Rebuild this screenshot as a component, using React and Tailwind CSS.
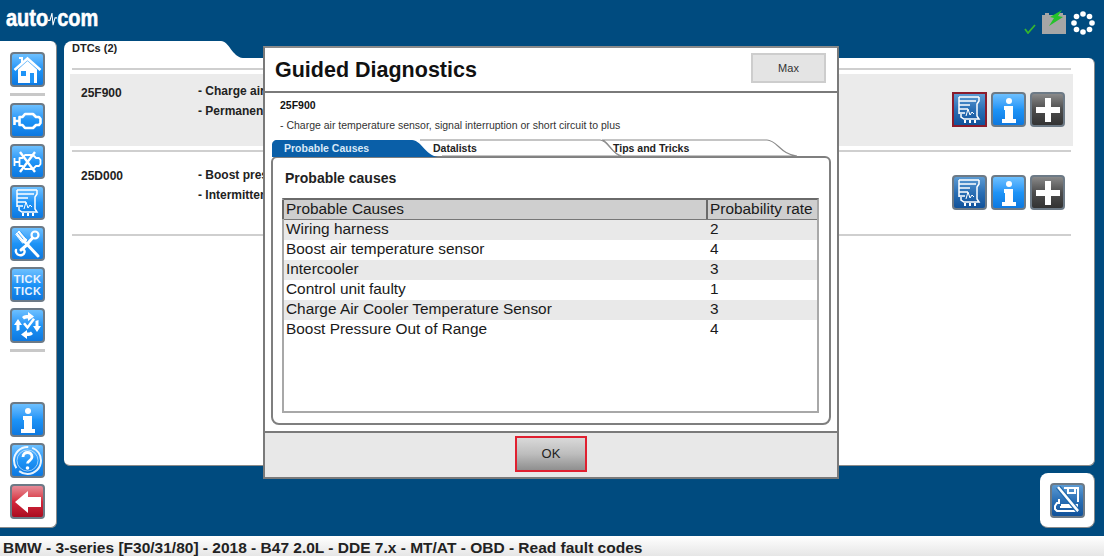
const causes = [
    ["Wiring harness", "2"],
    ["Boost air temperature sensor", "4"],
    ["Intercooler", "3"],
    ["Control unit faulty", "1"],
    ["Charge Air Cooler Temperature Sensor", "3"],
    ["Boost Pressure Out of Range", "4"],
];

const dtcs = [
    { code: "25F900", lines: ["- Charge air", "- Permanent"], active: true },
    { code: "25D000", lines: ["- Boost pres", "- Intermitten"], active: false },
];

const variants = {
    blue: "bg-gradient-to-b from-[#6cc0ff] via-[#1e94f7] to-[#0d78e0]",
    navy: "bg-gradient-to-b from-[#5c9bd3] via-[#2a6fb5] to-[#11529a]",
    red: "bg-gradient-to-b from-[#e58a98] via-[#d5263c] to-[#aa0c20]",
    dark: "bg-gradient-to-b from-[#8a8a8a] via-[#4d4d4d] to-[#333333]",
};

const IconButton = ({ variant = "blue", selected, children }) => (
    <div className={`w-[35px] h-[35px] shrink-0 rounded-[4px] flex items-center justify-center border-2 ${selected ? "border-[#8a1c2c] rounded-none" : "border-[#6d7a86]"} ${variants[variant]}`}>
        {children}
    </div>
);

const HomeIcon = () => (
    <svg width="29" height="28" viewBox="0 0 29 28" fill="none" stroke="#fff">
        <path d="M1.500 14 14.500 2.500l13 11.500" strokeWidth="2.600" />
        <path d="M6 2h3v5" strokeWidth="2" />
        <path d="M5 13.500 14.500 5l9.500 8.500V27H5z" fill="#fff" stroke="none" />
        <path d="M8 15h5v5H8zM17 17h4v10h-4z" fill="#1e94f7" stroke="none" />
    </svg>
);

const EngineIcon = ({ crossed }) => (
    <svg width="29" height="22" viewBox="0 0 29 22" fill="none" stroke="#fff" strokeWidth={crossed ? "1.800" : "2.600"} strokeLinejoin="round">
        <path d="M1.500 7v8M1.500 11h5M6.500 7h3l2.500-3h8l3 3h3l1.500 2v4l-1.500 2h-3l-3 3h-8l-2.500-3h-3z" />
        {crossed && <path d="M7 1l15 20M22 1 7 21" strokeWidth="2.400" />}
    </svg>
);

const DiagIcon = () => (
    <svg width="27" height="29" viewBox="0 0 27 29" fill="none" stroke="#fff" strokeWidth="1.500">
        <path d="M3 2h20M3 6h17M3 10h11M3 14h9M3 18h6M3 2v17" />
        <path d="M23 2v4l-2 3v12l2 3H8l-3-2v-3" />
        <path d="M10 21l2-7 2 6 2-3 2 2" strokeWidth="1" />
        <path d="M9 25v3M14 25v3M19 25v3" strokeWidth="2" />
    </svg>
);

const ToolsIcon = () => (
    <svg width="29" height="29" viewBox="0 0 29 29" fill="none" stroke="#fff" strokeLinecap="round">
        <path d="M11 12l14 15" strokeWidth="3" />
        <path d="M3 5l3-3 8 9-4 3z" fill="#fff" strokeWidth="1" />
        <path d="M5 4l5 6M8 3l5 6" stroke="#1e94f7" strokeWidth="0.800" />
        <path d="M15 15 8 21" strokeWidth="3" />
        <circle cx="22" cy="6" r="3.500" strokeWidth="2.200" />
        <path d="M19.500 9 15 14" strokeWidth="3" />
        <path d="M3 21c-1 4 3 6 6 5 3-1 3-4 2-5" strokeWidth="2.400" />
    </svg>
);

const TickIcon = () => (
    <div className="flex flex-col items-center text-[#e8f4ff] font-bold text-[11px] leading-[12px] tracking-[0.5px]">
        <span>TICK</span>
        <span>TICK</span>
    </div>
);

const CycleIcon = () => (
    <svg width="29" height="29" viewBox="0 0 29 29" fill="#fff">
        <path d="M9 6c2-2 4-2 6-2V1l6 4.500-6 4.500V7.500c-2 0-3 0-4 1zM20 23c-2 2-4 2-6 2v3l-6-4.500 6-4.500v2.500c2 0 3 0 4-1z" />
        <path d="M5 8l4 6H6.500v5l-3 1v-6H1zM24 21l-4-6h2.500v-5l3-1v6H28z" />
        <path d="M10 13l2-1.500 2.500 3L20 7l2 1.500-7.500 10z" />
    </svg>
);

const InfoIcon = () => (
    <svg width="16" height="28" viewBox="0 0 16 28" fill="#fff">
        <circle cx="8" cy="5" r="3" />
        <path d="M3 10h9v13h3v4H1v-4h3v-9H3z" />
    </svg>
);

const HelpIcon = () => (
    <svg width="31" height="31" viewBox="0 0 31 31" fill="none" stroke="#fff">
        <circle cx="15.500" cy="15.500" r="13.500" strokeWidth="2" strokeDasharray="30 4" opacity="0.900" />
        <circle cx="15.500" cy="15.500" r="10.500" strokeWidth="0.800" opacity="0.700" />
        <path d="M11 12c0-6 9-6 9 0 0 3.500-4.500 3.500-4.500 6.500" strokeWidth="2.800" />
        <circle cx="15.500" cy="23" r="1.800" fill="#fff" stroke="none" />
    </svg>
);

const BackIcon = () => (
    <svg width="28" height="24" viewBox="0 0 28 24" fill="#fff">
        <path d="M1 12 14 1v6h13v10H14v6z" />
    </svg>
);

const PlusIcon = () => (
    <svg width="26" height="26" viewBox="0 0 26 26" fill="#fff">
        <path d="M10 1h6v9h9v6h-9v9h-6v-9H1v-6h9z" />
    </svg>
);

const SaveIcon = () => (
    <svg width="28" height="28" viewBox="0 0 28 28" fill="none" stroke="#fff" strokeWidth="2">
        <path d="M11 2h14v14M15 2v5h7V2" />
        <path d="M6 13v4H4l-2 3v3l2 2h20v-6H8" />
        <path d="M7 21h13" />
        <path d="M5 1l20 24" stroke="#1f69ad" strokeWidth="5" />
        <path d="M5 1l20 24" strokeWidth="2.600" />
    </svg>
);

const Divider = () => <div className="w-[35px] h-[3px] bg-[#c8c8c8] mb-[1px] shrink-0" />;

const Sidebar = () => (
    <div className="w-[57px] h-[487px] bg-white rounded-r-[6px] border-r border-b border-[#8a8a8a] flex flex-col items-center gap-[6px] pr-[1px] pt-[11px] shrink-0">
        <IconButton><HomeIcon /></IconButton>
        <Divider />
        <IconButton><EngineIcon /></IconButton>
        <IconButton><EngineIcon crossed /></IconButton>
        <IconButton><DiagIcon /></IconButton>
        <IconButton><ToolsIcon /></IconButton>
        <IconButton><TickIcon /></IconButton>
        <IconButton><CycleIcon /></IconButton>
        <Divider />
        <div className="mt-[43px] flex flex-col gap-[6px]">
            <IconButton><InfoIcon /></IconButton>
            <IconButton><HelpIcon /></IconButton>
            <IconButton variant="red"><BackIcon /></IconButton>
        </div>
    </div>
);

const DtcRow = ({ code, lines, active }) => (
    <div className={`h-[72px] ml-[6px] mr-[21px] flex pl-[11px] pr-[8px] ${active ? "bg-[#ebebeb]" : "bg-white"}`}>
        <div className="w-[117px] pt-[12px] text-[12px] font-bold text-[#222] leading-[14px]">{code}</div>
        <div className={`flex-1 flex flex-col gap-[6px] text-[12px] font-bold text-[#222] leading-[14px] whitespace-nowrap ${active ? "pt-[10px]" : "pt-[11px]"}`}>
            {lines.map((line) => <div key={line}>{line}</div>)}
        </div>
        <div className="flex gap-[4px] pt-[18px]">
            <IconButton variant="navy" selected={active}><DiagIcon /></IconButton>
            <IconButton><InfoIcon /></IconButton>
            <IconButton variant="dark"><PlusIcon /></IconButton>
        </div>
    </div>
);

const RowLine = () => <div className="h-[2px] ml-[8px] mr-[23px] bg-[#cfcfcf]" />;

const MainPanel = () => (
    <div className="w-[1031px] h-[425px] flex flex-col">
        <div className="h-[17px] flex shrink-0">
            <div className="w-[157px] bg-white rounded-tl-[8px] pl-[8px] text-[11px] font-bold text-[#222] leading-[15px]">DTCs (2)</div>
            <svg width="22" height="17" viewBox="0 0 22 17" className="shrink-0">
                <path d="M0 0c8 0 11 16 22 17H0z" fill="#fff" />
            </svg>
        </div>
        <div className="flex-1 bg-white rounded-tr-[6px] rounded-b-[6px] border-b border-r border-[#8a8a8a] pt-[10px]">
            <RowLine />
            <div className="h-[4px]" />
            <DtcRow {...dtcs[0]} />
            <div className="h-[4px]" />
            <RowLine />
            <div className="h-[5px]" />
            <DtcRow {...dtcs[1]} />
            <div className="h-[5px]" />
            <RowLine />
        </div>
    </div>
);

const Tabs = () => (
    <div className="relative h-[17px] ml-[1px] text-[10.500px] font-bold leading-[18px]">
        <svg width="530" height="18" viewBox="0 0 530 18" className="absolute left-0 top-0">
            <path d="M148 1h180c8 0 12 15 22 16H170" fill="#fff" stroke="#8a8a8a" strokeWidth="1.200" />
            <path d="M330 1h165c10 0 14 15 30 16H350C340 16 336 1 330 1z" fill="#fff" stroke="#8a8a8a" strokeWidth="1.200" />
            <path d="M0 18V6c0-3 2-5 5-5h135c9 0 13 15 26 17z" fill="#0a5fa8" />
        </svg>
        <div className="relative flex">
            <span className="w-[161px] pl-[12px] text-[#d9e9f7]">Probable Causes</span>
            <span className="w-[180px] text-[#222]">Datalists</span>
            <span className="text-[#222]">Tips and Tricks</span>
        </div>
    </div>
);

const GuidedDiagnostics = () => (
    <div className="absolute left-[263px] top-[46px] w-[576px] h-[433px] flex flex-col bg-white border-2 border-[#7a7a7a] border-t-[#8a8a8a]">
        <div className="h-[45px] shrink-0 flex items-start justify-between pl-[10px] pr-[11px] border-b-2 border-[#7a7a7a]">
            <h1 className="text-[21.500px] font-bold text-[#111] leading-[44px]">Guided Diagnostics</h1>
            <div className="mt-[5px] w-[75px] h-[30px] bg-[#e4e4e4] border-2 border-[#cdcdcd] flex items-center justify-center text-[11px] text-[#333]">Max</div>
        </div>
        <div className="flex-1 px-[6px] pt-[6px] flex flex-col">
            <div className="text-[10.500px] font-bold text-[#111] leading-[13px] ml-[9px]">25F900</div>
            <div className="text-[10.500px] text-[#333] leading-[13px] mt-[7px] ml-[9px]">- Charge air temperature sensor, signal interruption or short circuit to plus</div>
            <div className="mt-[7px]"><Tabs /></div>
            <div className="h-[269px] border-2 border-[#7f7f7f] rounded-b-[8px] rounded-t-[6px] pl-[9px] pr-[10px] flex flex-col">
                <div className="text-[14px] font-bold text-[#222] leading-[16px] mt-[12px] ml-[3px]">Probable causes</div>
                <div className="mt-[12px] h-[215px] border-2 border-[#a8a8a8] border-t-[#6a6a6a] text-[15.400px] text-[#1a1a1a]">
                    <div className="h-[20px] flex bg-[#cfcfcf] border-b border-[#777] leading-[18px]">
                        <div className="w-[426px] pl-[2px] ml-[-2px] border-l-2 border-r-2 border-[#6a6a6a]">Probable Causes</div>
                        <div className="pl-[2px]">Probability rate</div>
                    </div>
                    {causes.map(([name, rate], i) => (
                        <div key={name} className={`h-[20px] flex leading-[18px] ${i % 2 === 0 ? "bg-[#e9e9e9]" : "bg-white"}`}>
                            <div className="w-[424px] pl-[2px]">{name}</div>
                            <div className="pl-[2px]">{rate}</div>
                        </div>
                    ))}
                </div>
            </div>
        </div>
        <div className="h-[46px] shrink-0 bg-[#e8e8e8] border-t-2 border-[#7a7a7a] flex justify-center pt-[3px]">
            <div className="w-[72px] h-[36px] bg-gradient-to-b from-[#d9d9d9] via-[#bdbdbd] to-[#8f8f8f] border-2 border-[#e02030] flex items-center justify-center text-[13px] text-[#222]">OK</div>
        </div>
    </div>
);

const Header = () => (
    <div className="h-[41px] flex items-start justify-between shrink-0 pl-[6px] pr-[9px]">
        <div className="flex items-center mt-[6px] text-white text-[20px] font-bold leading-[25px] scale-y-[1.2] [-webkit-text-stroke:0.5px_white]">
            <span>auto</span>
            <svg width="9" height="14" viewBox="0 0 9 14" fill="none" stroke="#fff" strokeWidth="1">
                <path d="M0 8h2l2-6 1 10 2-6h2" />
            </svg>
            <span>com</span>
        </div>
        <div className="flex items-start">
            <svg width="12" height="10" viewBox="0 0 12 10" fill="none" stroke="#35b52f" strokeWidth="1.800" className="mt-[24px] mr-[6px]">
                <path d="M1 5l3 4 7-8" />
            </svg>
            <svg width="24" height="24" viewBox="0 0 24 24" className="mt-[10px] mr-[5px]">
                <path d="M3 3h4v3H3zM17 3h4v3h-4zM0 5h24v19H0z" fill="#a6a6a6" />
                <path d="M20 0 8 7l4 1-5 8 14-9-5-1 4-6z" fill="#25c22b" />
            </svg>
            <svg width="24" height="24" viewBox="0 0 24 24" fill="#fff" className="mt-[11px]">
                <circle cx="12" cy="3" r="2.800" />
                <circle cx="18.500" cy="5.500" r="2.800" />
                <circle cx="21" cy="12" r="2.800" />
                <circle cx="18.500" cy="18.500" r="2.800" />
                <circle cx="12" cy="21" r="2.800" />
                <circle cx="5.500" cy="18.500" r="2.800" />
                <circle cx="3" cy="12" r="2.800" />
                <circle cx="5.500" cy="5.500" r="2.800" />
            </svg>
        </div>
    </div>
);

export default function App() {
    return (
        <div className="relative w-[1104px] h-[556px] overflow-hidden flex flex-col bg-[#004b7f] font-['Liberation_Sans',Arial,sans-serif]">
            <Header />
            <div className="flex-1 flex">
                <Sidebar />
                <div className="ml-[7px] flex flex-col">
                    <MainPanel />
                    <div className="mt-[7px] self-end w-[55px] h-[55px] bg-white rounded-[8px] border-r border-b border-[#8a8a8a] flex items-center justify-center">
                        <IconButton variant="navy"><SaveIcon /></IconButton>
                    </div>
                </div>
            </div>
            <div className="h-[20px] shrink-0 bg-gradient-to-b from-white to-[#e6e6e6] pl-[3px] text-[15.500px] font-bold text-[#222] leading-[23px] whitespace-nowrap">
                BMW - 3-series [F30/31/80] - 2018 - B47 2.0L - DDE 7.x - MT/AT - OBD - Read fault codes
            </div>
            <GuidedDiagnostics />
        </div>
    );
}
